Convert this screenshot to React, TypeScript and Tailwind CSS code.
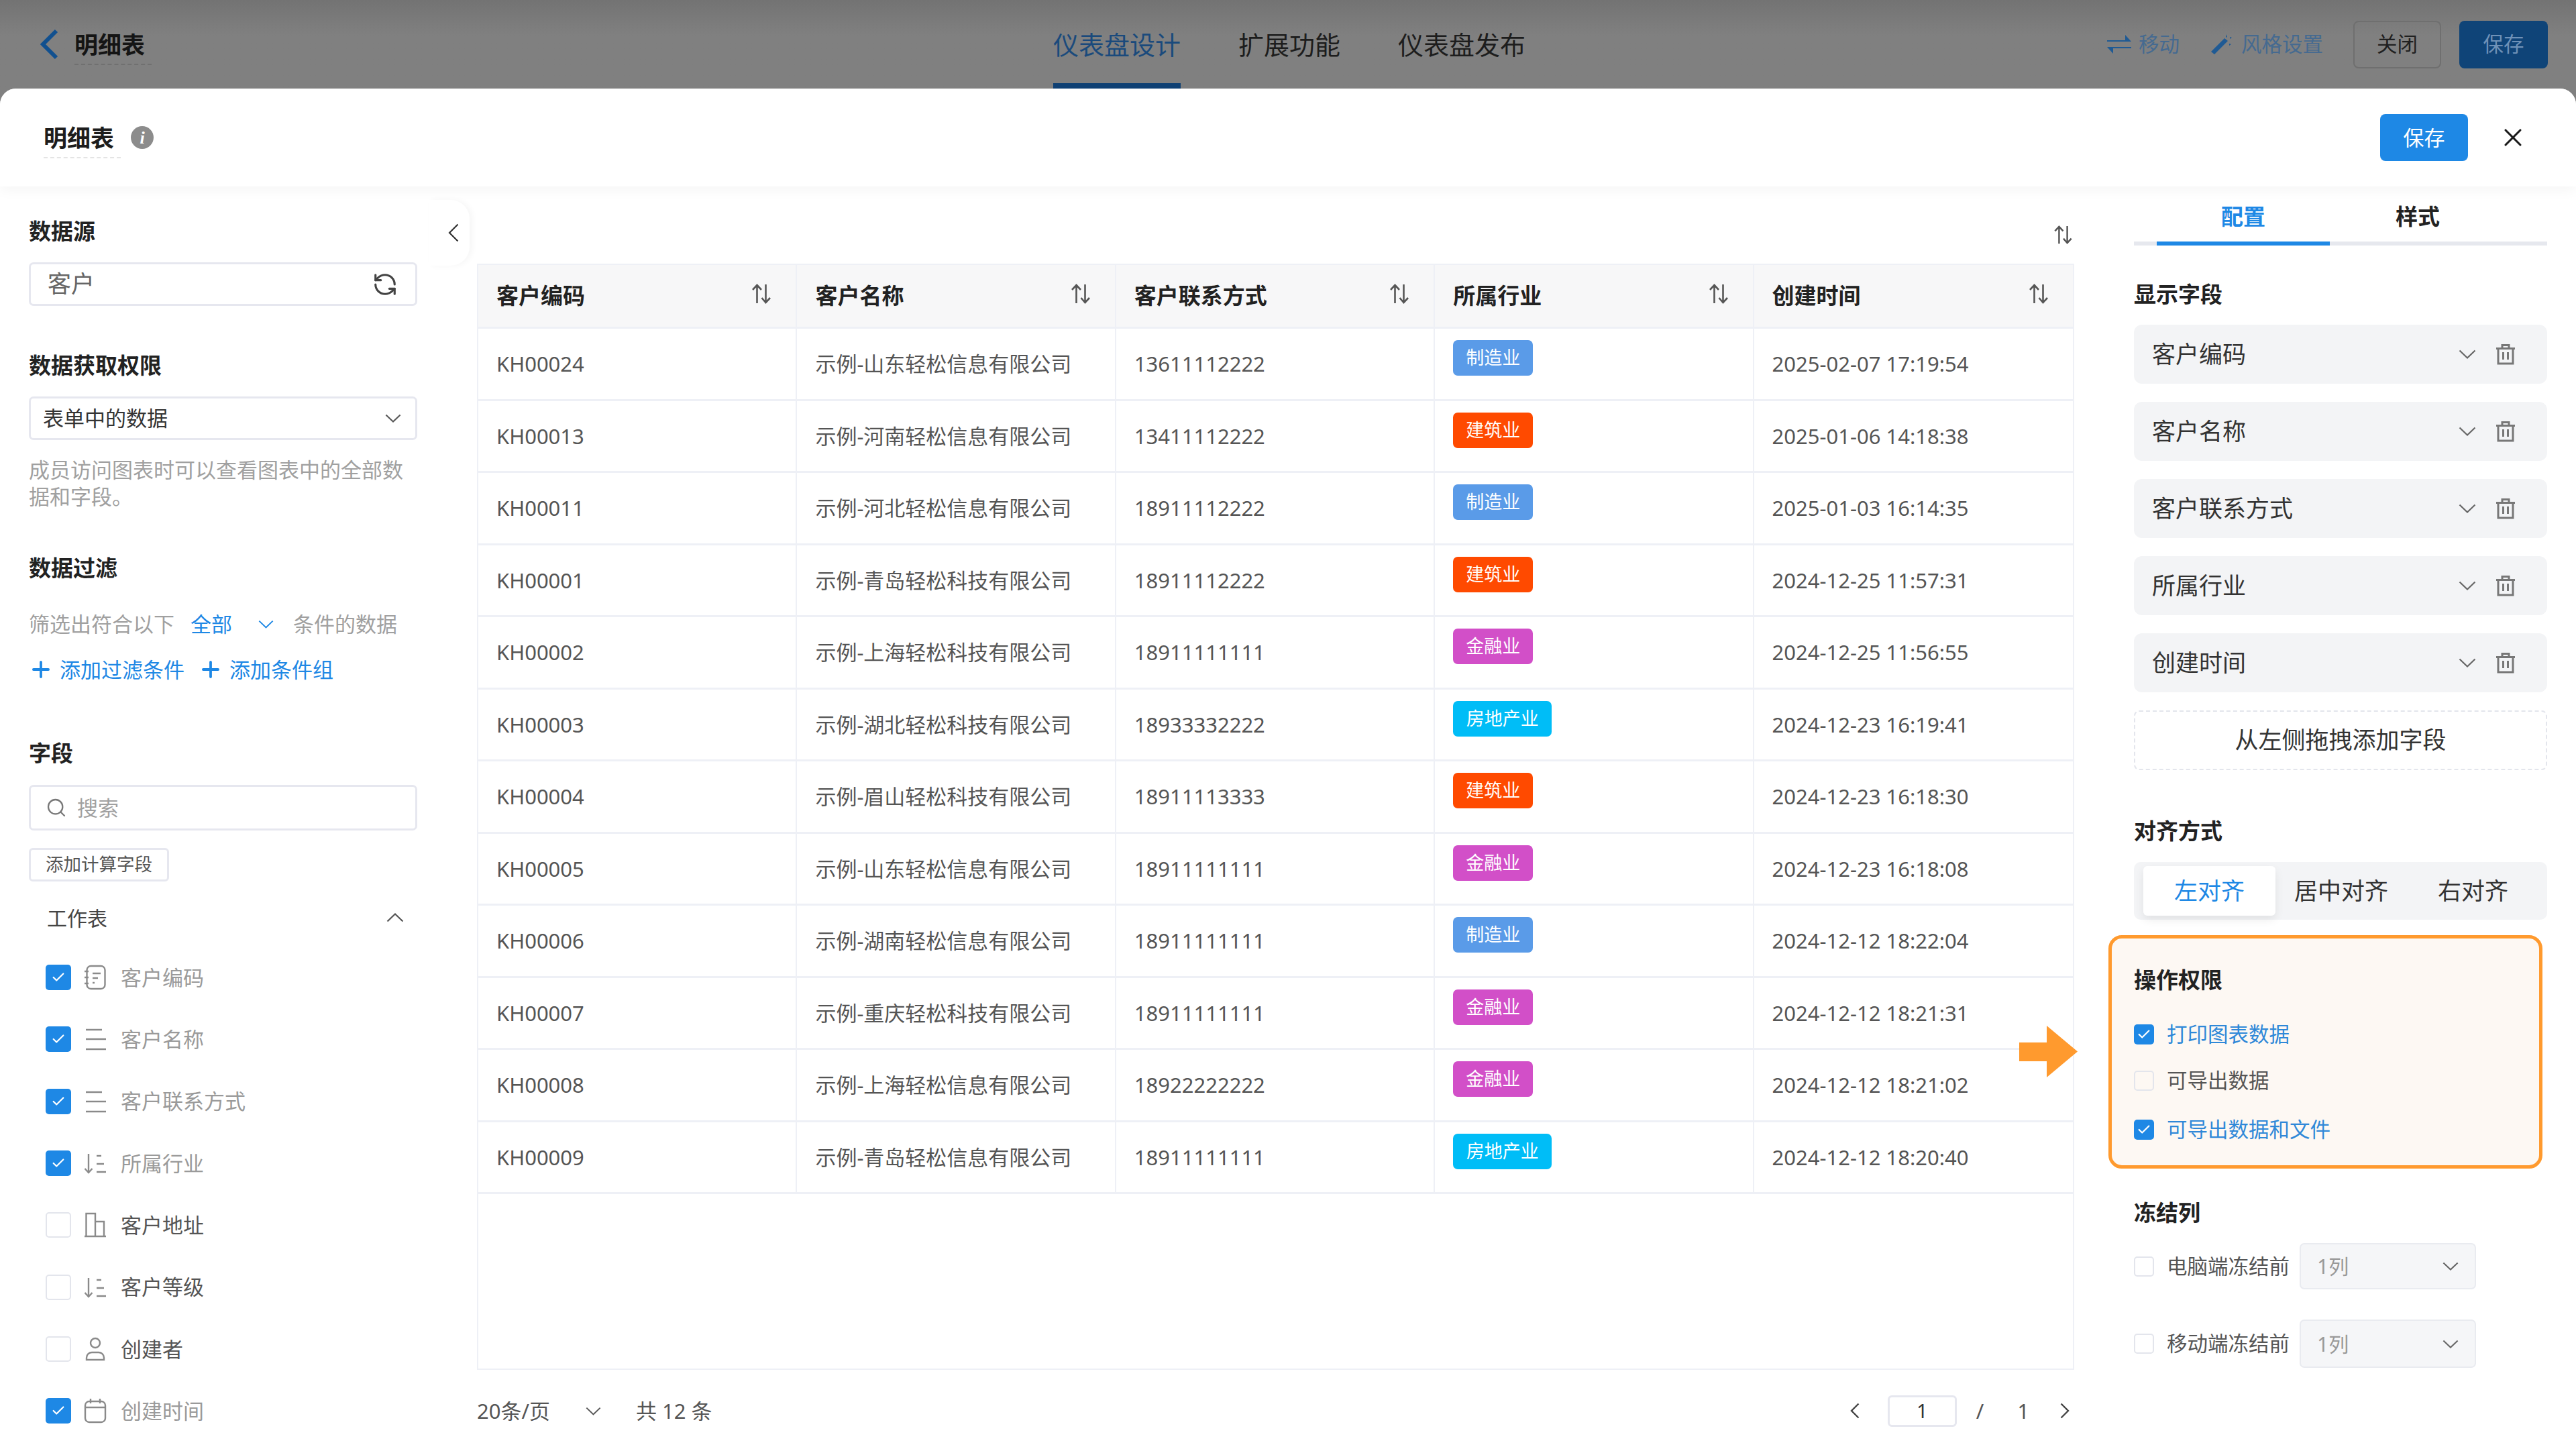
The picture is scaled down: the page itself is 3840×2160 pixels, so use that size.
import { Check, RefreshCcw, X, Search, Plus } from "lucide-react";

const rows = [
  ["KH00024", "示例-山东轻松信息有限公司", "13611112222", "制造业", "2025-02-07 17:19:54"],
  ["KH00013", "示例-河南轻松信息有限公司", "13411112222", "建筑业", "2025-01-06 14:18:38"],
  ["KH00011", "示例-河北轻松信息有限公司", "18911112222", "制造业", "2025-01-03 16:14:35"],
  ["KH00001", "示例-青岛轻松科技有限公司", "18911112222", "建筑业", "2024-12-25 11:57:31"],
  ["KH00002", "示例-上海轻松科技有限公司", "18911111111", "金融业", "2024-12-25 11:56:55"],
  ["KH00003", "示例-湖北轻松科技有限公司", "18933332222", "房地产业", "2024-12-23 16:19:41"],
  ["KH00004", "示例-眉山轻松科技有限公司", "18911113333", "建筑业", "2024-12-23 16:18:30"],
  ["KH00005", "示例-山东轻松信息有限公司", "18911111111", "金融业", "2024-12-23 16:18:08"],
  ["KH00006", "示例-湖南轻松信息有限公司", "18911111111", "制造业", "2024-12-12 18:22:04"],
  ["KH00007", "示例-重庆轻松科技有限公司", "18911111111", "金融业", "2024-12-12 18:21:31"],
  ["KH00008", "示例-上海轻松信息有限公司", "18922222222", "金融业", "2024-12-12 18:21:02"],
  ["KH00009", "示例-青岛轻松信息有限公司", "18911111111", "房地产业", "2024-12-12 18:20:40"],
];

const tagClass: Record<string, string> = {
  制造业: "w-[119px] bg-[#5a9be8]",
  建筑业: "w-[119px] bg-[#ff4a00]",
  金融业: "w-[119px] bg-[#d24fc8]",
  房地产业: "w-[147px] bg-[#00bdf7]",
};

const columns = ["客户编码", "客户名称", "客户联系方式", "所属行业", "创建时间"];

function ChevronDownIcon({ className = "" }: { className?: string }) {
  return (
    <svg viewBox="0 0 26 14" fill="none" stroke="currentColor" strokeWidth="2.2" className={className}>
      <path d="M1.5 1.5 13 12.5 24.5 1.5" />
    </svg>
  );
}

function SortIcon({ className = "" }: { className?: string }) {
  return (
    <svg viewBox="0 0 32 32" fill="none" stroke="currentColor" strokeWidth="2.6" className={className}>
      <path d="M9.5 30V3M3 10l6.5-7L16 10" />
      <path d="M22.5 2v27M16.5 22l6 7 6.500-7" />
    </svg>
  );
}

function TrashIcon() {
  return (
    <svg viewBox="0 0 30 32" fill="none" stroke="#777" strokeWidth="3" className="h-[32px] w-[30px]">
      <path d="M1 7.500h28M10 7.500V2.500h10v5M4 7.500V30h22V7.500M11.500 13v11M18.500 13v11" />
    </svg>
  );
}

function Checkbox({ on, className = "" }: { on?: boolean; className?: string }) {
  return on ? (
    <span className={`flex shrink-0 items-center justify-center rounded-[5px] bg-[#1e88e5] text-white ${className}`}>
      <Check size={22} strokeWidth={2.4} />
    </span>
  ) : (
    <span className={`block shrink-0 rounded-[5px] border-2 border-[#e3e5ec] ${className}`} />
  );
}

function FieldIcon({ kind }: { kind: string }) {
  const common = { viewBox: "0 0 34 38", fill: "none", stroke: "#8a8a8a", strokeWidth: 2.4, className: "h-[38px] w-[34px]" };
  if (kind === "code")
    return (
      <svg {...common}>
        <rect x="4.500" y="2" width="27" height="34" rx="6" />
        <path d="M1 10h6M1 19h6M1 28h6M13 13h12M13 20h8M13 27h3" />
      </svg>
    );
  if (kind === "text")
    return (
      <svg {...common}>
        <path d="M3 5h24M3 19h30M3 34h30" />
      </svg>
    );
  if (kind === "sort")
    return (
      <svg {...common}>
        <path d="M7 5v28M1.500 27l5.500 6 5.500-6M19 8h7M19 20h11M19 32h14" />
      </svg>
    );
  if (kind === "building")
    return (
      <svg {...common}>
        <path d="M1 36h32M3.500 36V2h13.500v34M17 14h13v22" />
      </svg>
    );
  if (kind === "user")
    return (
      <svg {...common}>
        <circle cx="17" cy="10" r="7" />
        <path d="M4 35v-3c0-5 4-8 8-8h10c4 0 8 3 8 8v3z" />
      </svg>
    );
  return (
    <svg {...common}>
      <rect x="2" y="5" width="30" height="31" rx="6" />
      <path d="M2 14h30M10 1v7M24 1v7" />
    </svg>
  );
}

const fields = [
  { name: "客户编码", icon: "code", on: true },
  { name: "客户名称", icon: "text", on: true },
  { name: "客户联系方式", icon: "text", on: true },
  { name: "所属行业", icon: "sort", on: true },
  { name: "客户地址", icon: "building", on: false },
  { name: "客户等级", icon: "sort", on: false },
  { name: "创建者", icon: "user", on: false },
  { name: "创建时间", icon: "calendar", on: true },
];

function Heading({ children, className = "" }: { children: React.ReactNode; className?: string }) {
  return <div className={`flex h-[46px] items-center text-[33px] font-bold text-[#222] ${className}`}>{children}</div>;
}

function TopBar() {
  return (
    <div className="flex h-[132px] items-center bg-linear-to-b from-[#737373] via-[#808080] via-40% to-[#808080] pl-[60px] pr-[42px]">
      <svg viewBox="0 0 27 46" fill="none" stroke="#11508f" strokeWidth="6" className="h-[46px] w-[27px]">
        <path d="M24 3 4 23l20 20" />
      </svg>
      <div className="ml-[24px] w-[115px] border-b-2 border-dashed border-[#707070] pb-[6px] pt-[8px] text-[35px] font-bold leading-[45px] text-[#151515]">
        明细表
      </div>
      <div className="ml-[1344px] flex h-full gap-[86px] text-[38px] text-[#1d1d1d]">
        <div className="flex h-full items-center border-b-[8px] border-[#0f4073] pt-[8px] text-[#1a4a7c]">仪表盘设计</div>
        <div className="flex h-full items-center pb-0">扩展功能</div>
        <div className="flex h-full items-center">仪表盘发布</div>
      </div>
      <div className="ml-auto flex items-center text-[30.500px] text-[#456a90]">
        <svg viewBox="0 0 36 30" className="h-[30px] w-[36px]" fill="#1f5a94">
          <path d="M0 9h27V1l9 10H0zM36 21H9v8L0 19h36z" />
        </svg>
        <span className="ml-[11px]">移动</span>
        <svg viewBox="0 0 32 30" className="ml-[47px] h-[30px] w-[32px]" fill="#1f5a94">
          <path d="M0 26 20 6l5 4L5 30zM22 0l2 4-2 1zM28 4l3 1-3 2zM27 14l3 1-3 2z" />
        </svg>
        <span className="ml-[13px]">风格设置</span>
        <div className="ml-[45px] flex h-[71px] w-[131px] items-center justify-center rounded-[8px] border-2 border-[#6f6f6f] text-[#202020]">
          关闭
        </div>
        <div className="ml-[27px] flex h-[71px] w-[132px] items-center justify-center rounded-[8px] bg-[#0f4478] text-[#6f92b8]">
          保存
        </div>
      </div>
    </div>
  );
}

function ModalHeader() {
  return (
    <div className="relative z-10 flex h-[146px] shrink-0 items-center bg-white pl-[65px] pr-[72px] shadow-[0_6px_18px_rgba(0,0,0,0.04)]">
      <div className="w-[115px] border-b-2 border-dashed border-[#e4e4e4] pb-[6px] pt-[8px] text-[35px] font-bold leading-[45px] text-[#1d1d1d]">
        明细表
      </div>
      <span className="ml-[15px] flex h-[34px] w-[34px] items-center justify-center rounded-full bg-[#8c8c8c] font-['Liberation_Serif',serif] text-[26px] font-bold italic text-white">
        i
      </span>
      <div className="ml-auto flex h-[70px] w-[131px] items-center justify-center rounded-[8px] bg-[#1e88e5] text-[31px] text-white">
        保存
      </div>
      <X size={44} strokeWidth={1.7} className="ml-[45px] text-[#1c1c1c]" />
    </div>
  );
}

function LeftPanel() {
  return (
    <div className="relative h-full w-[711px] shrink-0 overflow-hidden pl-[43px] pr-[89px] pt-[44px]">
      <Heading>数据源</Heading>
      <div className="mt-[23px] flex h-[65px] items-center justify-between rounded-[7px] border-[3px] border-[#e6e7ef] pl-[25px] pr-[26px] text-[35px] text-[#666]">
        客户
        <RefreshCcw size={38} strokeWidth={2} className="text-[#444]" />
      </div>

      <Heading className="mt-[66px]">数据获取权限</Heading>
      <div className="mt-[23px] flex h-[65px] items-center justify-between rounded-[7px] border-[3px] border-[#e6e7ef] pl-[18px] pr-[21px] text-[31px] text-[#333]">
        表单中的数据
        <ChevronDownIcon className="h-[13px] w-[24px] text-[#555]" />
      </div>
      <p className="mt-[24px] text-[31px] leading-[40px] text-[#a0a0a0]">成员访问图表时可以查看图表中的全部数据和字段。</p>

      <Heading className="mt-[64px]">数据过滤</Heading>
      <div className="mt-[40px] flex h-[40px] items-center text-[31px] text-[#a0a0a0]">
        <span>筛选出符合以下</span>
        <span className="ml-[24px] text-[#1e88e5]">全部</span>
        <ChevronDownIcon className="ml-[39px] h-[13px] w-[23px] text-[#1e88e5]" />
        <span className="ml-[29px]">条件的数据</span>
      </div>
      <div className="mt-[28px] flex h-[40px] items-center text-[31px] text-[#1e88e5]">
        <Plus size={38} strokeWidth={2.4} className="-ml-[1px]" />
        <span className="ml-[9px]">添加过滤条件</span>
        <Plus size={38} strokeWidth={2.4} className="ml-[20px]" />
        <span className="ml-[9px]">添加条件组</span>
      </div>

      <Heading className="mt-[82px]">字段</Heading>
      <div className="mt-[24px] flex h-[68px] items-center rounded-[7px] border-[3px] border-[#e6e7ef] pl-[22px] text-[31px] text-[#a0a0a0]">
        <Search size={32} strokeWidth={1.7} className="text-[#777]" />
        <span className="ml-[15px]">搜索</span>
      </div>
      <div className="mt-[26px] flex h-[50px] w-[209px] items-center justify-center rounded-[6px] border-[3px] border-[#e6e7ef] text-[26.500px] text-[#555]">
        添加计算字段
      </div>
      <div className="mt-[34px] flex h-[40px] items-center justify-between pl-[27px] pr-[20px] text-[30px] text-[#444]">
        工作表
        <ChevronDownIcon className="h-[14px] w-[26px] rotate-180 text-[#555]" />
      </div>
      <div className="mt-[23px] pl-[25px]">
        {fields.map((f) => (
          <div key={f.name} className="flex h-[92.300px] items-center">
            <Checkbox on={f.on} className="h-[38px] w-[38px]" />
            <span className="ml-[19px]">
              <FieldIcon kind={f.icon} />
            </span>
            <span className={`ml-[21px] text-[31px] ${f.on ? "text-[#9a9a9a]" : "text-[#555]"}`}>{f.name}</span>
          </div>
        ))}
      </div>
    </div>
  );
}

function DataTable() {
  return (
    <div className="h-[1649px] border-2 border-[#eef0f6]">
      <div className="grid h-[95px] grid-cols-5 border-b-[3px] border-[#eef0f6] bg-[#f7f7f8]">
        {columns.map((c, i) => (
          <div
            key={c}
            className={`flex items-center justify-between pl-[27px] pr-[35px] text-[33px] font-bold text-[#222] ${i < 4 ? "border-r-2 border-[#eef0f6]" : ""}`}
          >
            {c}
            <SortIcon className="-mt-[6px] h-[32px] w-[32px] text-[#555]" />
          </div>
        ))}
      </div>
      {rows.map((r) => (
        <div key={r[0]} className="grid h-[107.500px] grid-cols-5 border-b-[3px] border-[#eef0f6] text-[31px] text-[#555]">
          <div className="flex items-center border-r-2 border-[#eef0f6] pl-[27px]">{r[0]}</div>
          <div className="flex items-center border-r-2 border-[#eef0f6] pl-[27px]">{r[1]}</div>
          <div className="flex items-center border-r-2 border-[#eef0f6] pl-[27px]">{r[2]}</div>
          <div className="border-r-2 border-[#eef0f6] pl-[27px] pt-[17px]">
            <span className={`flex h-[53px] items-center justify-center rounded-[7px] text-[27px] text-white ${tagClass[r[3]]}`}>{r[3]}</span>
          </div>
          <div className="flex items-center pl-[27px]">{r[4]}</div>
        </div>
      ))}
    </div>
  );
}

function Pagination() {
  return (
    <div className="mt-[36px] flex h-[50px] items-center text-[31px] text-[#555]">
      <span>20条/页</span>
      <ChevronDownIcon className="ml-[53px] h-[13px] w-[23px] text-[#555]" />
      <span className="ml-[52px]">共 12 条</span>
      <svg viewBox="0 0 14 24" fill="none" stroke="#444" strokeWidth="2.4" className="ml-auto h-[24px] w-[14px]">
        <path d="M12.500 1.500 2 12l10.500 10.500" />
      </svg>
      <div className="ml-[42px] flex h-[47px] w-[103px] items-center justify-center rounded-[6px] border-[3px] border-[#e6e7ef] text-[29px] text-[#333]">
        1
      </div>
      <span className="ml-[29px]">/</span>
      <span className="ml-[50px]">1</span>
      <svg viewBox="0 0 14 24" fill="none" stroke="#444" strokeWidth="2.4" className="ml-[46px] mr-[7px] h-[24px] w-[14px]">
        <path d="M1.500 1.500 12 12 1.500 22.500" />
      </svg>
    </div>
  );
}

function PermissionRow({ on, top, children }: { on?: boolean; top: string; children: React.ReactNode }) {
  return (
    <div className={`flex h-[40px] items-center ${top}`}>
      <Checkbox on={on} className="h-[30px] w-[30px]" />
      <span className={`ml-[19px] text-[30.500px] ${on ? "text-[#2f88d8]" : "text-[#555]"}`}>{children}</span>
    </div>
  );
}

function RightPanel() {
  return (
    <div className="w-[705px] shrink-0 pl-[89px]">
      <div className="flex h-[88px] w-[616px] border-b-[6px] border-[#e6e8ee] pl-[34px] text-[33px] font-bold">
        <div className="-mb-[6px] flex w-[258px] items-center justify-center border-b-[6px] border-[#1e88e5] pt-[8px] text-[#1e88e5]">配置</div>
        <div className="flex w-[262px] items-center justify-center pt-[8px] text-[#222]">样式</div>
      </div>

      <Heading className="mt-[50px]">显示字段</Heading>
      <div className="mt-[22px] flex w-[616px] flex-col gap-[27px]">
        {columns.map((c) => (
          <div key={c} className="flex h-[88px] items-center rounded-[12px] bg-[#f3f4f6] pl-[27px] pr-[47px] text-[35px] text-[#333]">
            {c}
            <ChevronDownIcon className="ml-auto h-[14px] w-[26px] text-[#666]" />
            <span className="ml-[29px]">
              <TrashIcon />
            </span>
          </div>
        ))}
      </div>
      <div className="mt-[27px] flex h-[89px] w-[616px] items-center justify-center rounded-[8px] border-2 border-dashed border-[#e3e5ec] text-[35px] text-[#333]">
        从左侧拖拽添加字段
      </div>

      <Heading className="mt-[68px]">对齐方式</Heading>
      <div className="mt-[23px] flex h-[86px] w-[616px] items-center rounded-[10px] bg-[#f3f4f6] pl-[14px] text-[35px] text-[#333]">
        <div className="flex h-[74px] w-[197px] items-center justify-center rounded-[6px] bg-white text-[#1e88e5] shadow-[0_6px_14px_rgba(0,0,0,0.08)]">左对齐</div>
        <div className="flex w-[196px] justify-center">居中对齐</div>
        <div className="flex w-[197px] justify-center">右对齐</div>
      </div>

      <div className="mt-[23px] -ml-[38px] h-[348px] w-[647px] rounded-[20px] border-[5px] border-[#ff9a2e] bg-[#fdf8f3] pl-[33px] pt-[39px]">
        <Heading>操作权限</Heading>
        <PermissionRow on top="mt-[38px]">打印图表数据</PermissionRow>
        <PermissionRow top="mt-[29px]">可导出数据</PermissionRow>
        <PermissionRow on top="mt-[33px]">可导出数据和文件</PermissionRow>
      </div>

      <Heading className="mt-[43px]">冻结列</Heading>
      <div className="mt-[22px] flex h-[69px] items-center">
        <Checkbox className="h-[30px] w-[30px]" />
        <span className="ml-[19px] text-[30.500px] text-[#555]">电脑端冻结前</span>
        <div className="ml-[15px] flex h-full w-[263px] items-center justify-between rounded-[7px] border-2 border-[#e9ebf0] bg-[#f5f6f8] pl-[24px] pr-[24px] text-[30px] text-[#999]">
          1列
          <ChevronDownIcon className="h-[13px] w-[24px] text-[#666]" />
        </div>
      </div>
      <div className="mt-[45px] flex h-[72px] items-center">
        <Checkbox className="h-[30px] w-[30px]" />
        <span className="ml-[19px] text-[30.500px] text-[#555]">移动端冻结前</span>
        <div className="ml-[15px] flex h-full w-[263px] items-center justify-between rounded-[7px] border-2 border-[#e9ebf0] bg-[#f5f6f8] pl-[24px] pr-[24px] text-[30px] text-[#999]">
          1列
          <ChevronDownIcon className="h-[13px] w-[24px] text-[#666]" />
        </div>
      </div>
    </div>
  );
}

export default function App() {
  return (
    <div className="relative h-[2160px] w-[3840px] overflow-hidden bg-[#808080] font-['Noto_Sans','Noto_Sans_CJK_SC',sans-serif]">
      <TopBar />
      <div className="flex h-[2028px] flex-col overflow-hidden rounded-t-[24px] bg-white">
        <ModalHeader />
        <div className="relative flex flex-1">
          <LeftPanel />
          {/* collapse tab sits over the edge of the left panel */}
          <div className="absolute left-[640px] top-[20px] flex h-[98px] w-[60px] items-center justify-end rounded-r-[28px] bg-white pr-[16px] shadow-[4px_0_10px_rgba(0,0,0,0.04)]">
            <svg viewBox="0 0 16 28" fill="none" stroke="#333" strokeWidth="2.200" className="h-[28px] w-[16px]">
              <path d="M14.500 1.500 2 14l12.500 12.500" />
            </svg>
          </div>
          <div className="w-[2381px] shrink-0 pt-[57px]">
            <div className="mb-[28px] flex h-[30px] justify-end pr-[1px]">
              <SortIcon className="h-[30px] w-[31px] text-[#555]" />
            </div>
            <DataTable />
            <Pagination />
          </div>
          <RightPanel />
          {/* arrow pointing at the highlighted box */}
          <svg viewBox="0 0 87 77" className="absolute left-[3010px] top-[1251px] h-[77px] w-[87px]" fill="#ff9a2e">
            <path d="M0 25h41V0l46 38.500L41 77V53H0z" />
          </svg>
        </div>
      </div>
    </div>
  );
}
